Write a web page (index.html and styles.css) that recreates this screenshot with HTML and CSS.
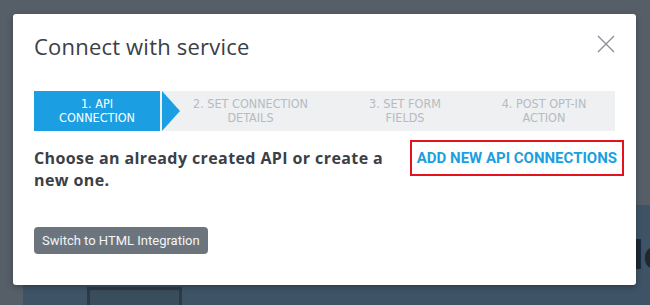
FILE: index.html
```html
<!DOCTYPE html>
<html lang="en">
<head>
  <meta charset="UTF-8">
  <meta name="viewport" content="width=device-width, initial-scale=1.0">
  <title>Connect with service</title>
  <link rel="stylesheet" href="styles.css">
</head>
<body>
  <!-- page behind the dialog, already dimmed -->
  <div class="page">
    <div class="page-top"></div>
    <div class="hero">
      <div class="hero-card"></div>
      <h1 class="hero-title">Handle</h1>
    </div>
  </div>

  <div class="modal">
    <div class="modal-header">
      <h2 class="modal-title">Connect with service</h2>
      <button class="modal-close" aria-label="Close">
        <svg width="18" height="18" viewBox="0 0 18 18">
          <path d="M1 1 L17 17 M17 1 L1 17" stroke="#8c9298" stroke-width="1.4" fill="none"/>
        </svg>
      </button>
    </div>

    <div class="steps">
      <div class="step step-active">1. API<br>CONNECTION</div>
      <div class="step step-second">2. SET CONNECTION<br>DETAILS</div>
      <div class="step">3. SET FORM<br>FIELDS</div>
      <div class="step">4. POST OPT-IN<br>ACTION</div>
    </div>

    <div class="choose-row">
      <p class="choose-text">Choose an already created API or create a new one.</p>
      <a href="#" class="add-link">Add new API connections</a>
    </div>

    <button class="switch-button">Switch to HTML Integration</button>
  </div>
</body>
</html>
```

FILE: styles.css
```css
:root {
  --primary-color: #1b9fe2;
  --text-primary: #3a4047;
  --step-text: #b6bbbf;
  --step-background: #eef0f2;
  --button-gray: #6c757d;
  --highlight-red: #e3121c;
}

* {
  box-sizing: border-box;
}

body {
  margin: 0;
  width: 650px;
  height: 305px;
  overflow: hidden;
  position: relative;
  background-color: #565f68;
  font-family: Roboto, 'Noto Sans', sans-serif;
}

/* dimmed page */
.page {
  height: 100%;
  display: flex;
  flex-direction: column;
}

.page-top {
  height: 205px;
}

.hero {
  flex: 1;
  margin-left: 23px;
  background-color: #3e5466;
  display: flex;
  align-items: flex-end;
  overflow: hidden;
}

.hero-card {
  width: 95px;
  height: 30px;
  margin: 0 0 -12px 64px;
  border: 3px solid #2c3a46;
  background-color: #3a4d5d;
}

.hero-title {
  align-self: flex-start;
  margin: 27px -15px 0 auto;
  font-size: 40px;
  font-weight: 700;
  color: #1d2832;
}

/* dialog */
.modal {
  position: absolute;
  left: 13px;
  top: 14px;
  width: 623px;
  height: 271px;
  padding: 0 21px;
  background-color: #fff;
  border-radius: 3px;
  box-shadow: 0 2px 6px rgba(0, 0, 0, 0.3);
}

.modal-header {
  display: flex;
  justify-content: space-between;
  align-items: center;
  padding-top: 20px;
}

.modal-title {
  margin: 0;
  font-family: 'Open Sans', Roboto, sans-serif;
  font-size: 22px;
  line-height: 24px;
  font-weight: 400;
  letter-spacing: 0.2px;
  color: var(--text-primary);
}

.modal-close {
  padding: 0;
  border: none;
  background: none;
  display: flex;
  margin-top: -4px;
}

.steps {
  display: grid;
  grid-template-columns: 126px 177px 136px 1fr;
  height: 40px;
  margin-top: 33px;
  background-color: var(--step-background);
}

.step {
  display: flex;
  align-items: center;
  justify-content: center;
  text-align: center;
  font-family: 'DejaVu Sans Condensed', 'DejaVu Sans', sans-serif;
  font-size: 12.5px;
  line-height: 14px;
  color: var(--step-text);
}

.step-active {
  position: relative;
  background-color: var(--primary-color);
  color: #fff;
}

.step-active::after {
  content: "";
  position: absolute;
  top: 0;
  left: calc(100% + 2px);
  border-left: 18px solid var(--primary-color);
  border-top: 20px solid transparent;
  border-bottom: 20px solid transparent;
}

.step-second {
  padding: 0 16px 0 20px;
}

.choose-row {
  display: flex;
  justify-content: space-between;
  align-items: flex-start;
  margin-top: 9px;
}

.choose-text {
  width: 372px;
  margin: 7px 0 0;
  font-family: 'Open Sans', Roboto, sans-serif;
  font-size: 16px;
  line-height: 22px;
  font-weight: 700;
  letter-spacing: 0.4px;
  color: #3b4046;
}

.add-link {
  height: 36px;
  margin-right: -9px;
  padding: 0 5px;
  display: flex;
  align-items: center;
  border: 2px solid var(--highlight-red);
  color: var(--primary-color);
  font-size: 15px;
  font-weight: 700;
  text-transform: uppercase;
  text-decoration: none;
}

.switch-button {
  height: 27px;
  margin-top: 36px;
  padding: 0 8px;
  border: none;
  border-radius: 4px;
  background-color: var(--button-gray);
  color: #f4f5f6;
  font-family: Roboto, sans-serif;
  font-size: 13px;
}
```
